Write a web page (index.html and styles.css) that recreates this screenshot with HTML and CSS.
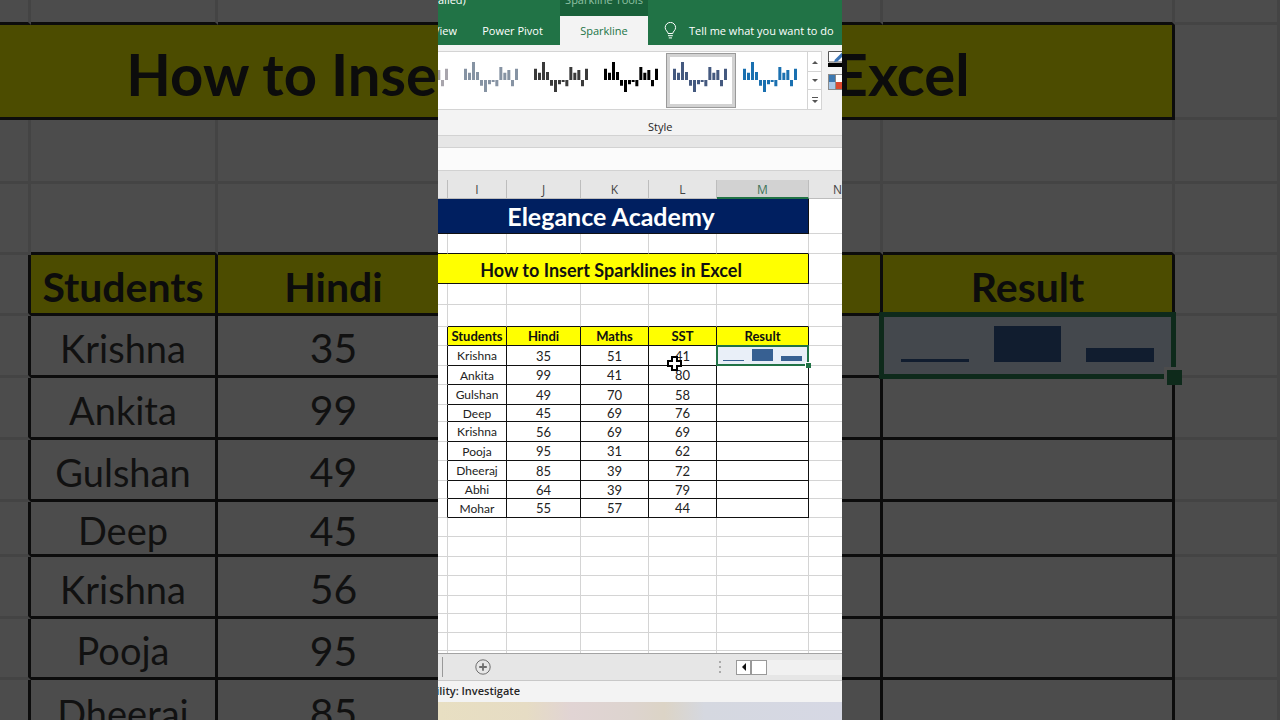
FILE: index.html
```html
<!DOCTYPE html>
<html lang="en">
<head>
<meta charset="utf-8">
<title>Elegance Academy - Excel</title>
<link rel="stylesheet" href="styles.css">
</head>
<body>
<svg class="defs" aria-hidden="true">
  <symbol id="winloss" viewBox="0 0 162 90">
    <path d="M0 20h9v34H0zM12 32h9v22h-9zM24 0h9v54h-9zM36 30h9v24h-9zM48 54h9v17h-9zM60 54h9v36h-9zM72 54h9v13h-9zM83 54h9v6h-9zM94 54h9v19h-9zM106 15h9v39h-9zM118 32h9v22h-9zM130 24h9v30h-9zM141 54h9v19h-9zM153 20h9v34h-9z"/>
  </symbol>
</svg>

<div class="backdrop" aria-hidden="true">
  <table class="sheet large">
    <colgroup><col class="h"><col class="i"><col class="j"><col class="k"><col class="l"><col class="m"><col></colgroup>
    <tbody>
    <tr class="b25"><td class="under"></td><td class="under"></td><td class="under"></td><td class="under"></td><td class="under"></td><td class="under"></td><td></td></tr>
    <tr class="b95"><td class="ink yellow topic" colspan="6">How to Insert Sparklines in Excel</td><td></td></tr>
    <tr class="b64"><td></td><td></td><td></td><td></td><td></td><td></td><td></td></tr>
    <tr class="b71"><td></td><td class="under"></td><td class="under"></td><td class="under"></td><td class="under"></td><td class="under"></td><td></td></tr>
    <tr class="b61 data head"><td class="edge"></td><td>Students</td><td>Hindi</td><td></td><td></td><td>Result</td><td class="plain"></td></tr>
    <tr class="b62 data"><td class="edge"></td><td class="name">Krishna</td><td>35</td><td></td><td></td><td class="cell"><div class="selected"><svg class="bars" viewBox="0 0 289 59" preserveAspectRatio="none"><path d="M18 43h68v3H18zM111 10h67v36h-67zM203 32h68v14h-68z"/></svg><span class="handle"></span></div></td><td class="plain"></td></tr>
    <tr class="b62 data"><td class="edge"></td><td class="name">Ankita</td><td>99</td><td></td><td></td><td></td><td class="plain"></td></tr>
    <tr class="b62 data"><td class="edge"></td><td class="name">Gulshan</td><td>49</td><td></td><td></td><td></td><td class="plain"></td></tr>
    <tr class="b55 data"><td class="edge"></td><td class="name">Deep</td><td>45</td><td></td><td></td><td></td><td class="plain"></td></tr>
    <tr class="b62 data"><td class="edge"></td><td class="name">Krishna</td><td>56</td><td></td><td></td><td></td><td class="plain"></td></tr>
    <tr class="b61 data"><td class="edge"></td><td class="name">Pooja</td><td>95</td><td></td><td></td><td></td><td class="plain"></td></tr>
    <tr class="b64 data"><td class="edge"></td><td class="name">Dheeraj</td><td>85</td><td></td><td></td><td></td><td class="plain"></td></tr>
    </tbody>
  </table>
</div>

<main class="app">
  <header class="top">
    <div class="titlebar"><span class="doc">ailed)</span><span class="context">Sparkline Tools</span></div>
    <nav class="tabs">
      <button class="tab view">View</button>
      <button class="tab pivot">Power Pivot</button>
      <button class="tab active">Sparkline</button>
      <button class="tab tell"><svg class="bulb" viewBox="0 0 13 17"><path d="M4 11.500C4 9.500 1.200 8.500 1.200 5.600a5.200 5.200 0 0 1 10.400 0C11.600 8.500 8.800 9.500 8.800 11.500zM4 13.700h4.800M4.800 15.900h3.200"/></svg>Tell me what you want to do</button>
    </nav>
  </header>

  <section class="ribbon">
    <div class="tools">
      <div class="gallery">
        <div class="styles">
          <button class="style s1" aria-label="Style 1"><svg><use href="#winloss"/></svg></button>
          <button class="style s2" aria-label="Style 2"><svg><use href="#winloss"/></svg></button>
          <button class="style s3" aria-label="Style 3"><svg><use href="#winloss"/></svg></button>
          <button class="style s4" aria-label="Style 4"><svg><use href="#winloss"/></svg></button>
          <button class="style s5" aria-label="Style 5"><svg><use href="#winloss"/></svg></button>
          <button class="style s6" aria-label="Style 6"><svg><use href="#winloss"/></svg></button>
        </div>
        <div class="scroller">
          <button aria-label="Previous row"><svg viewBox="0 0 6 6"><path d="M0 5l3-3 3 3z"/></svg></button>
          <button aria-label="Next row"><svg viewBox="0 0 6 6"><path d="M0 1l3 3 3-3z"/></svg></button>
          <button aria-label="More"><svg viewBox="0 0 6 6"><path d="M0 0h6v1H0zM0 3l3 3 3-3z"/></svg></button>
        </div>
      </div>
      <div class="colors">
        <button aria-label="Sparkline Color"><svg viewBox="0 0 20 16"><path d="M.5 11V.5H20V11z" fill="#fff" stroke="#555"/><path d="M7 8.500l7-7 2.500 2-7 7-3.500.500z" fill="#3c74b5"/><path d="M0 12h20v4H0z"/></svg></button>
        <button aria-label="Marker Color"><svg viewBox="0 0 20 16"><path d="M0 0h20v16H0z" fill="#8a8a8a"/><path d="M1 1h6v7H1z" fill="#3c78b0"/><path d="M8 1h7v7H8z" fill="#fff"/><path d="M1 8h6v7H1z" fill="#a8c8e8"/><path d="M8 8h7v7H8z" fill="#dc4a30"/></svg></button>
      </div>
    </div>
    <div class="group-name">Style</div>
  </section>

  <input class="formula" type="text" aria-label="Formula bar">

  <section class="grid">
    <table class="sheet">
      <colgroup><col class="h"><col class="i"><col class="j"><col class="k"><col class="l"><col class="m"><col class="n"></colgroup>
      <thead><tr><th></th><th>I</th><th>J</th><th>K</th><th>L</th><th class="current">M</th><th>N</th></tr></thead>
      <tbody>
      <tr class="r35"><td class="ink navy" colspan="6">Elegance Academy</td><td></td></tr>
      <tr class="r20"><td class="under"></td><td class="under"></td><td class="under"></td><td class="under"></td><td class="under"></td><td class="under"></td><td></td></tr>
      <tr class="r30"><td class="ink yellow topic" colspan="6">How to Insert Sparklines in Excel</td><td></td></tr>
      <tr class="r21"><td></td><td></td><td></td><td></td><td></td><td></td><td></td></tr>
      <tr class="r22"><td></td><td class="under"></td><td class="under"></td><td class="under"></td><td class="under"></td><td class="under"></td><td></td></tr>
      <tr class="r19 data head"><td class="edge"></td><td>Students</td><td>Hindi</td><td>Maths</td><td>SST</td><td>Result</td><td class="plain"></td></tr>
      <tr class="r20 data"><td class="edge"></td><td class="name">Krishna</td><td>35</td><td>51</td><td class="cell">41<svg class="cursor" viewBox="0 0 15 15"><path d="M5 1h5v4h4v5h-4v4H5v-4H1V5h4z"/></svg></td><td class="cell"><div class="selected"><svg class="bars" viewBox="0 0 91 19" preserveAspectRatio="none"><path d="M6 14h21v1H6zM35 3h21v12H35zM64 10h21v5H64z"/></svg><span class="handle"></span></div></td><td class="plain"></td></tr>
      <tr class="r19 data"><td class="edge"></td><td class="name">Ankita</td><td>99</td><td>41</td><td>80</td><td></td><td class="plain"></td></tr>
      <tr class="r20 data"><td class="edge"></td><td class="name">Gulshan</td><td>49</td><td>70</td><td>58</td><td></td><td class="plain"></td></tr>
      <tr class="r17 data"><td class="edge"></td><td class="name">Deep</td><td>45</td><td>69</td><td>76</td><td></td><td class="plain"></td></tr>
      <tr class="r20 data"><td class="edge"></td><td class="name">Krishna</td><td>56</td><td>69</td><td>69</td><td></td><td class="plain"></td></tr>
      <tr class="r19 data"><td class="edge"></td><td class="name">Pooja</td><td>95</td><td>31</td><td>62</td><td></td><td class="plain"></td></tr>
      <tr class="r20 data"><td class="edge"></td><td class="name">Dheeraj</td><td>85</td><td>39</td><td>72</td><td></td><td class="plain"></td></tr>
      <tr class="r18 data"><td class="edge"></td><td class="name">Abhi</td><td>64</td><td>39</td><td>79</td><td></td><td class="plain"></td></tr>
      <tr class="r19 data"><td class="edge"></td><td class="name">Mohar</td><td>55</td><td>57</td><td>44</td><td></td><td class="plain"></td></tr>
      <tr class="r19"><td></td><td></td><td></td><td></td><td></td><td></td><td></td></tr>
      <tr class="r20"><td></td><td></td><td></td><td></td><td></td><td></td><td></td></tr>
      <tr class="r19"><td></td><td></td><td></td><td></td><td></td><td></td><td></td></tr>
      <tr class="r20"><td></td><td></td><td></td><td></td><td></td><td></td><td></td></tr>
      <tr class="r18"><td></td><td></td><td></td><td></td><td></td><td></td><td></td></tr>
      <tr class="r19"><td></td><td></td><td></td><td></td><td></td><td></td><td></td></tr>
      <tr class="r18"><td></td><td></td><td></td><td></td><td></td><td></td><td></td></tr>
      <tr class="r19"><td></td><td></td><td></td><td></td><td></td><td></td><td></td></tr>
      </tbody>
    </table>
  </section>

  <footer>
    <div class="sheetbar">
      <span class="divider"></span>
      <button class="add" aria-label="New sheet"><svg viewBox="0 0 16 16"><circle cx="8" cy="8" r="7.200"/><path d="M8 4.200v7.600M4.200 8h7.600" stroke-width="1.800"/></svg></button>
      <svg class="grip" viewBox="0 0 2 12"><path d="M0 0h2v2H0zM0 5h2v2H0zM0 10h2v2H0z"/></svg>
      <div class="hscroll"><button class="left" aria-label="Scroll left"><svg viewBox="0 0 4 8"><path d="M4 0v8L0 4z"/></svg></button><span class="thumb"></span></div>
    </div>
    <div class="status"><span>Accessibility: Investigate</span></div>
    <div class="taskbar"></div>
  </footer>
</main>
</body>
</html>
```
FILE: styles.css
```css
* { box-sizing: border-box; }
body {
  margin: 0;
  background: #4c4c4c;
  font-family: "Open Sans", "Noto Sans", sans-serif;
  font-size: 11px;
  color: #262626;
}
button {
  margin: 0;
  padding: 0;
  border: 0;
  background: none;
  font: inherit;
  color: inherit;
}
svg { display: block; }
.defs { display: none; }

/* Spreadsheet cells, shared by the sheet and the backdrop */
.sheet {
  --line: 1px;
  --drop: 1px;
  --grid: #d4d4d4;
  --ink: #111;
  --yellow: #ffff00;
  --green: #217346;
  --bar: #376092;
  --fill: #e9eff8;
  table-layout: fixed;
  width: 429px;
  border-collapse: separate;
  border-spacing: 0;
  font-family: Lato, sans-serif;
  font-size: 13px;
  line-height: 1;
  color: #222;
  white-space: nowrap;
}
.sheet td {
  padding: var(--drop) 0 0;
  text-align: center;
  border: 0 solid var(--grid);
  border-width: 0 var(--line) var(--line) 0;
}
.sheet td.under { border-bottom-color: var(--ink); }
.sheet td.ink, .sheet .data td { border-color: var(--ink); }
.sheet .data td.edge { border-bottom-color: var(--grid); background: none; }
.sheet .data td.plain { border-color: var(--grid); background: none; }
.yellow, .head td { background: var(--yellow); color: var(--ink); font-weight: bold; }
.sheet td.name { font-size: 12px; }
.sheet td.topic { padding: 2px 24px 0 0; font-size: 18px; }
.sheet td.navy {
  padding-right: 24px;
  background: #001f60;
  color: #fff;
  font-size: 25px;
  font-weight: bold;
}
.h { width: 10px; }
.i { width: 59px; }
.j { width: 74px; }
.k, .l { width: 68px; }
.m { width: 92px; }
.n { width: 58px; }
.r17 { height: 17px; }
.r18 { height: 18px; }
.r19 { height: 19px; }
.r20 { height: 20px; }
.r21 { height: 21px; }
.r22 { height: 22px; }
.r30 { height: 30px; }
.r35 { height: 35px; }

.cell { position: relative; }
.selected {
  position: absolute;
  inset: 0;
  background: var(--fill);
  outline: 2px solid var(--green);
  outline-offset: -1px;
}
.bars { width: 100%; height: 100%; fill: var(--bar); }
.handle {
  position: absolute;
  right: -3px;
  bottom: -3px;
  width: 6px;
  height: 6px;
  background: var(--green);
  border: solid #fff;
  border-width: 1px 0 0 1px;
}
.cursor {
  position: absolute;
  left: 18px;
  top: 10px;
  width: 15px;
  height: 15px;
  z-index: 1;
  fill: #fff;
  stroke: #000;
  stroke-width: 2;
}

/* Enlarged dark copy behind the window */
.backdrop { position: absolute; inset: 0; overflow: hidden; }
.large {
  --line: 3px;
  --drop: 4px;
  --grid: #444;
  --ink: #0c0c0c;
  --yellow: #4c4c00;
  --green: #0e2a1b;
  --bar: #111d2f;
  --fill: #44484d;
  width: 100%;
  font-size: 41px;
  color: #111;
}
.large td.topic { padding: 6px 76px 0 0; font-size: 58px; }
.large td.name { font-size: 38px; }
.large .h { width: 31px; }
.large .i { width: 187px; }
.large .j { width: 234px; }
.large .k { width: 216px; }
.large .l { width: 215px; }
.large .m { width: 292px; }
.large .selected { outline-width: 5px; outline-offset: -1px; }
.large .handle { right: -10px; bottom: -10px; width: 18px; height: 18px; border-width: 3px 0 0 3px; border-color: #4c4c4c; }
.b25 { height: 25px; }
.b55 { height: 55px; }
.b61 { height: 61px; }
.b62 { height: 62px; }
.b64 { height: 64px; }
.b71 { height: 71px; }
.b95 { height: 95px; }

/* Window */
.app {
  position: relative;
  display: flex;
  flex-direction: column;
  width: clamp(404px, 31vw, 429px);
  height: 100vh;
  min-height: 600px;
  margin: 0 auto;
  overflow: hidden;
  background: #e6e6e6;
}
.top { background: #217346; color: #fff; overflow: hidden; }
.titlebar { display: flex; margin-top: -8px; height: 24px; line-height: 16px; }
.doc { width: 122px; }
.context { width: 88px; background: #19603a; color: #8fc0a4; text-align: center; }
.tabs { display: flex; height: 29px; white-space: nowrap; }
.view { display: flex; align-items: center; justify-content: flex-end; width: 19px; overflow: hidden; }
.pivot { width: 103px; padding-left: 8px; }
.active { width: 88px; background: #f3f3f3; color: #217346; }
.tell { display: flex; align-items: center; gap: 12px; padding-left: 16px; }
.bulb { width: 13px; height: 17px; fill: none; stroke: #fff; }

.ribbon { height: 91px; padding-top: 6px; background: #f3f3f3; border-bottom: 1px solid #d2d2d2; }
.tools { display: flex; gap: 6px; }
.gallery { display: flex; width: 384px; height: 59px; background: #fff; border: solid #d4d4d4; border-width: 1px 0; }
.styles { display: flex; flex: 1; justify-content: flex-end; padding: 1px 1px 1px 0; overflow: hidden; }
.style { display: flex; flex: none; width: 70px; padding: 9px 8px; }
.style svg { width: 54px; height: 30px; }
.s1 { fill: #a8a5ac; }
.s2 { fill: #8693a3; }
.s3 { fill: #3a3a3a; }
.s4 { fill: #000; }
.s5 { fill: #44597f; padding: 8px 6px; border: 1px solid #9a9a9a; box-shadow: inset 0 0 0 3px #d2d2d2; }
.s6 { fill: #1a70b0; padding: 9px 7px; }
.scroller { display: grid; grid-template-rows: 20px 18px 1fr; width: 15px; border: solid #d4d4d4; border-width: 0 1px; }
.scroller button { display: grid; place-items: center; border-bottom: 1px solid #d4d4d4; }
.scroller button:last-child { border-bottom: 0; }
.scroller svg { width: 6px; height: 6px; fill: #555; }
.colors { display: grid; align-content: start; gap: 7px; width: 14px; overflow: hidden; }
.colors svg { width: 20px; height: 16px; }
.group-name { padding: 9px 0 0 210px; line-height: 16px; }

.formula {
  width: 100%;
  height: 24px;
  margin: 11px 0 9px;
  padding: 0 8px;
  border: solid #d2d2d2;
  border-width: 1px 0;
  background: #fbfbfb;
  font: inherit;
}

.grid { flex: 1 1 0; min-height: 0; overflow: hidden; background: linear-gradient(#e6e6e6 19px, #fff 19px); }
.sheet th {
  height: 19px;
  padding: 2px 0 0;
  border: solid #bdbdbd;
  border-width: 0 1px 1px 0;
  background: #e6e6e6;
  color: #444;
  font-family: "Open Sans", sans-serif;
  font-size: 12px;
  font-weight: normal;
}
.sheet th.current { background: #d2d2d2; color: #3f7459; border-bottom: 2px solid #217346; }

.sheetbar { display: flex; align-items: center; height: 28px; padding-left: 4px; border: solid #a3a3a3; border-width: 1px 0; border-bottom-color: #c8c8c8; background: #e6e6e6; }
.divider { width: 1px; height: 20px; background: #999; }
.add { margin-left: 32px; }
.add svg { width: 16px; height: 16px; fill: none; stroke: #6e6e6e; }
.grip { width: 2px; height: 12px; margin-left: auto; fill: #aaa; }
.hscroll { display: flex; width: 106px; height: 15px; margin-left: 15px; background: #f1f1f1; }
.left { display: grid; place-items: center; width: 15px; background: #fff; border: 1px solid #999; }
.left svg { width: 4px; height: 8px; fill: #111; }
.thumb { width: 16px; background: #fff; border: 1px solid #999; }
.status { display: flex; height: 21px; background: #f3f3f3; line-height: 20px; font-weight: 600; }
.status span { display: flex; justify-content: flex-end; width: 82px; overflow: hidden; white-space: nowrap; }
.taskbar { height: 18px; background: linear-gradient(90deg, #e8dfc2 0, #e6dcc4 22%, #e1d4d4 33%, #ddd4cf 48%, #dcd4c6 56%, #d5d8e0 66%, #d6d8e4 100%); }
```
